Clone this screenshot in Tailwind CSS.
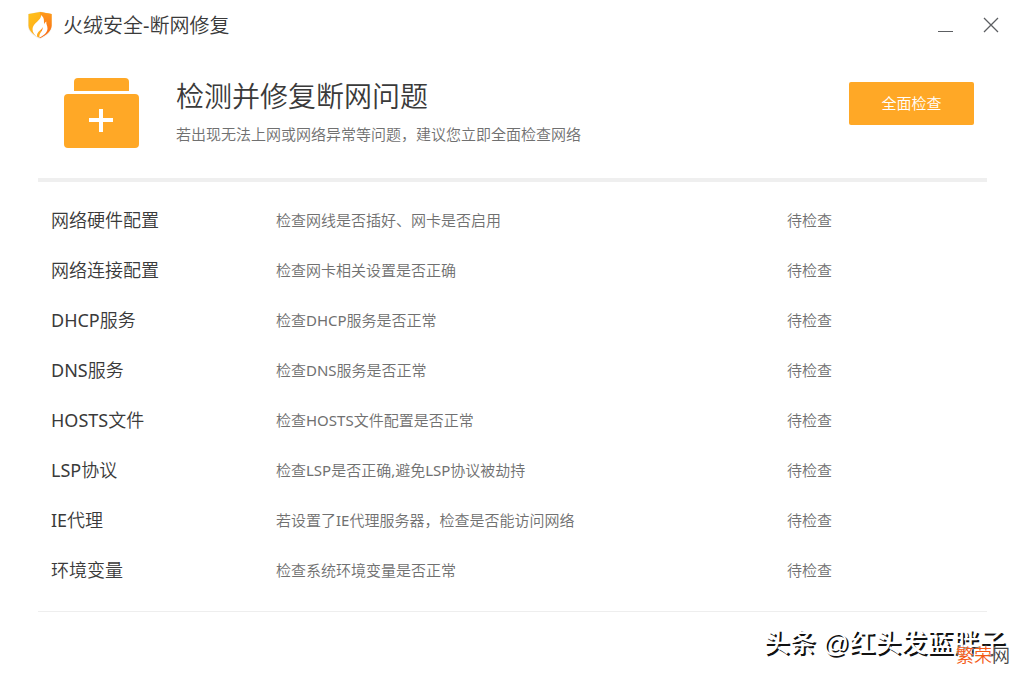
<!DOCTYPE html>
<html lang="zh-CN">
<head>
<meta charset="utf-8">
<meta name="viewport" content="width=device-width, initial-scale=1">
<title>火绒安全-断网修复</title>
<script src="https://cdn.jsdelivr.net/npm/@tailwindcss/browser@4"></script>
</head>
<body class="relative flex min-h-screen flex-col bg-white font-['Noto_Sans','Noto_Sans_CJK_SC_DemiLight','Noto_Sans_CJK_SC',sans-serif] font-normal text-[#3a3a3a]">
<header class="flex h-[50px] items-center justify-between pr-[18px] pl-7">
  <div class="flex items-center gap-[11px]">
    <svg class="h-7 w-6" viewBox="0 0 24 28" aria-hidden="true">
      <defs>
        <linearGradient id="gold" x1="0" y1="0" x2="1" y2="1"><stop offset="0" stop-color="#ffc21a"/><stop offset="1" stop-color="#ff9d1c"/></linearGradient>
        <linearGradient id="flame" x1="0" y1="0" x2="0" y2="1"><stop offset="0" stop-color="#ff9a1a"/><stop offset="1" stop-color="#f9661a"/></linearGradient>
      </defs>
      <path d="M12 0.5 L24 3 V15 C24 21 18 25.500 12 28 C6 25.500 0 21 0 15 V3Z" fill="#ececec"/>
      <path d="M12 1 L23.500 3 V14.500 C23.500 20 17.500 24.500 12 27 C6.500 24.500 0.500 20 0.500 14.500 V3Z" fill="url(#gold)"/>
      <path d="M12 1 L23.500 3 V14.500 C23.500 20 17.500 24.500 12 27 L14 14Z" fill="url(#flame)"/>
      <path d="M13 4 C14 9 4.500 12 4.500 18 C4.500 21.500 6.500 24 9 25.500 C8.500 20 14 19.500 14.500 16 C15.500 20 10.500 22 11.500 26.500 C16 24.500 19.500 21.500 19.500 17.500 C19.500 14.500 18 13.500 18.300 10.500 C16.800 11.500 16.300 12.500 16.300 13.500 C15.500 10 17 7 13 4Z" fill="#fff"/>
    </svg>
    <h1 class="pt-px text-xl">火绒安全-断网修复</h1>
  </div>
  <div class="flex items-center gap-[14px] text-[#5c5e62]">
    <button type="button" aria-label="最小化" class="flex h-8 w-8 items-center justify-center"><svg class="h-4 w-4" viewBox="0 0 16 16"><path d="M1 14.500H16" stroke="currentColor"/></svg></button>
    <button type="button" aria-label="关闭" class="flex h-8 w-8 items-center justify-center"><svg class="h-4 w-4" viewBox="0 0 16 16"><path d="M1 1L15 15M15 1L1 15" stroke="currentColor" stroke-width="1.300"/></svg></button>
  </div>
</header>
<main class="mr-[38px] ml-[38px] border-b border-[#eee] pb-4">
  <section class="flex h-[132px] items-start border-b-4 border-[#efefef] pr-[13px] pl-[26px]">
    <svg class="mt-7 h-[70px] w-[75px] shrink-0" viewBox="0 0 75 70" aria-hidden="true">
      <path d="M10 13V4Q10 0 14 0H61Q65 0 65 4V13Z" fill="#ffa826"/>
      <rect y="16" width="75" height="54" rx="4" fill="#ffa826"/>
      <path d="M25 42H49M37 31V54" stroke="#fff" stroke-width="4"/>
    </svg>
    <div class="mt-[26px] ml-[37px] flex-1">
      <h2 class="text-[28px] leading-10">检测并修复断网问题</h2>
      <p class="mt-[6px] text-[15px] leading-6 text-[#707070]">若出现无法上网或网络异常等问题，建议您立即全面检查网络</p>
    </div>
    <button type="button" class="mt-8 h-[43px] w-[125px] rounded-xs bg-[#ffa826] text-[15px] text-white">全面检查</button>
  </section>
  <table class="mt-[13px] w-full table-fixed text-left text-[15px] text-[#707070]">
    <colgroup><col class="w-[238px]"><col><col class="w-[200px]"></colgroup>
    <tbody>
      <tr class="h-[50px]"><th scope="row" class="pl-[13px] text-lg font-normal text-[#3a3a3a]">网络硬件配置</th><td>检查网线是否插好、网卡是否启用</td><td>待检查</td></tr>
      <tr class="h-[50px]"><th scope="row" class="pl-[13px] text-lg font-normal text-[#3a3a3a]">网络连接配置</th><td>检查网卡相关设置是否正确</td><td>待检查</td></tr>
      <tr class="h-[50px]"><th scope="row" class="pl-[13px] text-lg font-normal text-[#3a3a3a]">DHCP服务</th><td>检查DHCP服务是否正常</td><td>待检查</td></tr>
      <tr class="h-[50px]"><th scope="row" class="pl-[13px] text-lg font-normal text-[#3a3a3a]">DNS服务</th><td>检查DNS服务是否正常</td><td>待检查</td></tr>
      <tr class="h-[50px]"><th scope="row" class="pl-[13px] text-lg font-normal text-[#3a3a3a]">HOSTS文件</th><td>检查HOSTS文件配置是否正常</td><td>待检查</td></tr>
      <tr class="h-[50px]"><th scope="row" class="pl-[13px] text-lg font-normal text-[#3a3a3a]">LSP协议</th><td>检查LSP是否正确,避免LSP协议被劫持</td><td>待检查</td></tr>
      <tr class="h-[50px]"><th scope="row" class="pl-[13px] text-lg font-normal text-[#3a3a3a]">IE代理</th><td>若设置了IE代理服务器，检查是否能访问网络</td><td>待检查</td></tr>
      <tr class="h-[50px]"><th scope="row" class="pl-[13px] text-lg font-normal text-[#3a3a3a]">环境变量</th><td>检查系统环境变量是否正常</td><td>待检查</td></tr>
    </tbody>
  </table>
</main>
<p class="absolute right-[20px] bottom-[12px] font-['Liberation_Sans','Noto_Sans_CJK_SC',sans-serif] text-[26px] leading-10 font-medium whitespace-nowrap text-white [text-shadow:2px_2px_0_#111]">头条 @红头发蓝胖子</p>
<p class="absolute right-[15px] bottom-[6px] text-lg font-normal leading-7 whitespace-nowrap text-[#444] [text-shadow:0_0_2px_#fff,0_0_2px_#fff]"><span class="text-[#f45a14]">繁荣</span>网</p>
</body>
</html>
